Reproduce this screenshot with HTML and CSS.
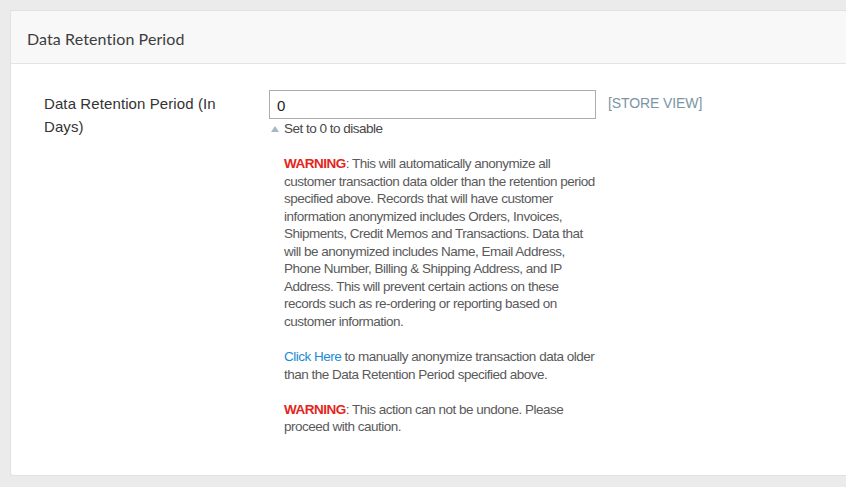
FILE: index.html
```html
<!DOCTYPE html>
<html>
<head>
<meta charset="utf-8">
<link rel="stylesheet" href="styles.css">
</head>
<body>
<div class="card">
  <div class="card-header">Data Retention Period</div>
  <div class="card-body">
    <div class="row">
      <label class="label">Data Retention Period (In Days)</label>
      <div class="control">
        <div class="input-line">
          <input class="text-input" type="text" value="0">
          <span class="scope">[STORE VIEW]</span>
        </div>
        <div class="note"><span class="tri"></span>Set to 0 to disable</div>
        <div class="comment">
          <p><span class="warn">WARNING</span>: This will automatically anonymize all customer transaction data older than the retention period specified above. Records that will have customer information anonymized includes Orders, Invoices, Shipments, Credit Memos and Transactions. Data that will be anonymized includes Name, Email Address, Phone Number, Billing &amp; Shipping Address, and IP Address. This will prevent certain actions on these records such as re-ordering or reporting based on customer information.</p>
          <p><a class="link" href="#">Click Here</a> to manually anonymize transaction data older than the Data Retention Period specified above.</p>
          <p class="last"><span class="warn">WARNING</span>: This action can not be undone. Please proceed with caution.</p>
        </div>
      </div>
    </div>
  </div>
</div>
</body>
</html>
```

FILE: styles.css
```css
html, body {
  margin: 0;
  padding: 0;
  background: #ebebeb;
  height: 487px;
  overflow: hidden;
}
body {
  padding: 10px 0 0 10px;
  font-family: "Liberation Sans", Arial, sans-serif;
}
.card {
  background: #fff;
  border: 1px solid #e1e1e1;
  border-right: none;
  border-radius: 3px 0 0 3px;
  width: 850px;
  box-sizing: border-box;
}
.card-header {
  height: 53px;
  box-sizing: border-box;
  background: #f8f8f8;
  border-bottom: 1px solid #e4e4e4;
  border-radius: 3px 0 0 0;
  padding: 3px 0 0 16px;
  display: flex;
  align-items: center;
  font-family: Lato, "Noto Sans", sans-serif;
  font-size: 16px;
  color: #3d3d3d;
  letter-spacing: 0.1px;
}
.card-body {
  padding: 26px 0 39px 33px;
}
.row {
  display: flex;
  align-items: flex-start;
}
.label {
  width: 225px;
  flex: none;
  font-size: 15px;
  letter-spacing: 0.1px;
  line-height: 23px;
  color: #333;
  padding-top: 2px;
  padding-right: 10px;
  box-sizing: border-box;
}
.control {
  display: flex;
  flex-direction: column;
}
.input-line {
  display: flex;
  align-items: flex-start;
  gap: 12px;
}
.text-input {
  width: 327px;
  height: 29px;
  box-sizing: border-box;
  border: 1px solid #adadad;
  padding: 2px 7px 0;
  margin: 0;
  font-family: "Liberation Sans", Arial, sans-serif;
  font-size: 15px;
  color: #222;
  background: #fff;
  outline: none;
}
.scope {
  font-size: 14px;
  letter-spacing: -0.1px;
  line-height: 18px;
  padding-top: 4px;
  color: #7b95a4;
  white-space: nowrap;
}
.note {
  display: flex;
  align-items: center;
  font-size: 13.5px;
  letter-spacing: -0.5px;
  line-height: 17px;
  color: #474747;
  margin-top: 1px;
  padding-left: 2px;
}
.tri {
  width: 0;
  height: 0;
  border-left: 4px solid transparent;
  border-right: 4px solid transparent;
  border-bottom: 6px solid #a7b8c4;
  margin-right: 5px;
  margin-top: 1px;
}
.comment {
  margin: 18px 0 0 15px;
  width: 313px;
  font-size: 13.5px;
  letter-spacing: -0.5px;
  line-height: 17.55px;
  color: #5a5a5a;
}
.comment p {
  margin: 0 0 17.5px;
}
.comment p.last {
  margin-bottom: 0;
}
.warn {
  color: #e3251c;
  font-weight: bold;
}
.link {
  color: #1d8ad6;
  text-decoration: none;
}
```
